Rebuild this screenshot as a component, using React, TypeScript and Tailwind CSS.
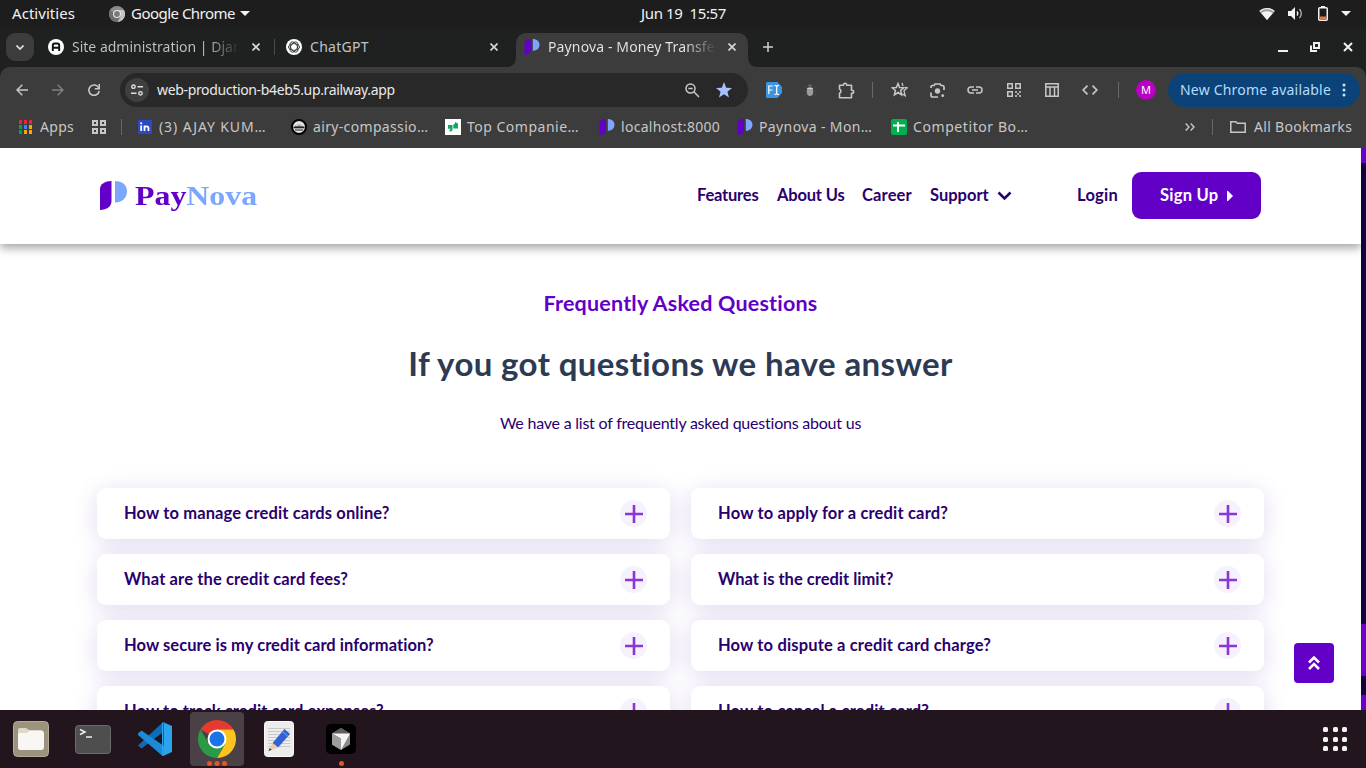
import type { ReactNode } from "react";

type Box = { children?: ReactNode; className?: string };

function Svg({ w, h = w, vb, className = "", children }: { w: number; h?: number; vb?: string; className?: string; children: ReactNode }) {
  return (
    <svg width={w} height={h} viewBox={vb ?? `0 0 ${w} ${h}`} className={`block shrink-0 ${className}`} fill="none">
      {children}
    </svg>
  );
}

function T({ className = "", children }: Box) {
  return <span className={`inline-block shrink-0 whitespace-pre ${className}`}>{children}</span>;
}

function NovaMark({ w = 16, h = 16 }: { w?: number; h?: number }) {
  return (
    <Svg w={w} h={h} vb="0 0 27 29">
      <path d="M0 29V8C0 3 5 0 11.5 0V20C11.5 25.500 7 28.500 0 29Z" fill="#6200c8" />
      <path d="M15 0C22 0 27 4 27 10.500C27 17 22 21.500 15 21.500Z" fill="#7da7ff" />
    </Svg>
  );
}

function Cell({ children, className = "w-9" }: Box) {
  return <div className={`flex h-9 shrink-0 items-center justify-center ${className}`}>{children}</div>;
}

function TopBar() {
  return (
    <div className="grid h-[27px] grid-cols-[641px_1fr_auto] items-center bg-[#1d1d1d] text-[15px] leading-[27px] text-[#f2f2f2]">
      <div className="flex items-center pl-3">
        <T className="w-[97px] tracking-[0.05px]">Activities</T>
        <Svg w={16}>
          <circle cx="8" cy="8" r="8" fill="#8c8c8c" />
          <path d="M8 4h7A8 8 0 0 1 8.500 16l3.500-6Z" fill="#c4c4c4" />
          <path d="M1 4.500A8 8 0 0 0 8.500 16L11 11Z" fill="#6e6e6e" />
          <circle cx="8" cy="8" r="4" fill="#e8e8e8" />
          <circle cx="8" cy="8" r="2.900" fill="#7b7b7b" />
        </Svg>
        <T className="ml-[6px] w-[109px] tracking-[-0.52px]">Google Chrome</T>
        <Svg w={10} h={5}><path d="M0 0h10L5 5Z" fill="#f2f2f2" /></Svg>
      </div>
      <T className="tracking-[-0.37px]">{"Jun 19  15:57"}</T>
      <div className="flex items-center pr-[15px]">
        <Svg w={16} h={14}>
          <path d="M0 4C4.500 0 11.500 0 16 4L8 13Z" fill="#9a9a9a" />
          <path d="M1 4.200C5 .8 11 .8 15 4.200" stroke="#f2f2f2" strokeWidth="1.200" />
          <path d="M2.200 6C5.500 3.600 10.500 3.600 13.800 6L8 13Z" fill="#f2f2f2" />
        </Svg>
        <Svg w={15} h={13} className="ml-[13px]">
          <path d="M0 4h3l4-4v13l-4-4H0Z" fill="#f2f2f2" />
          <path d="M9 4.500q1.600 2 0 4" stroke="#f2f2f2" strokeWidth="1.300" />
          <path d="M11.500 2q3.600 4.500 0 9" stroke="#b5b5b5" strokeWidth="1.300" />
        </Svg>
        <Svg w={10} h={15} className="ml-[15px]">
          <path d="M3 0h4v1.500H3Z" fill="#f2f2f2" />
          <rect x=".75" y="1.750" width="8.500" height="12.500" rx="1" stroke="#f2f2f2" strokeWidth="1.500" />
          <rect x="2" y="10.500" width="6" height="2.500" fill="#f0743c" />
        </Svg>
        <Svg w={10} h={5} className="ml-[13px]"><path d="M0 0h10L5 5Z" fill="#f2f2f2" /></Svg>
      </div>
    </div>
  );
}

function Close({ className = "" }: { className?: string }) {
  return <Svg w={8} className={className}><path d="M.5.500l7 7M7.500.500l-7 7" stroke="#d8d8d8" strokeWidth="1.600" /></Svg>;
}

function TabStrip() {
  return (
    <div className="flex h-10 items-center bg-[#1f2020] text-sm text-[#c3c3c3]">
      <div className="ml-[6px] flex size-7 items-center justify-center rounded-[9px] bg-[#3c3c3c]">
        <Svg w={8} h={5}><path d="M.5.500 4 4 7.500.500" stroke="#e0e0e0" strokeWidth="1.700" /></Svg>
      </div>
      <div className="ml-[14px] flex w-[226px] items-center">
        <Svg w={16}>
          <circle cx="8" cy="8" r="8" fill="#fff" />
          <path d="M4.800 12V6.200Q4.800 4.500 6.500 4.500h3Q11.200 4.500 11.200 6.200V12M4.800 8.800h6.400" stroke="#111" strokeWidth="1.900" />
        </Svg>
        <div className="ml-2 w-[168px] overflow-hidden bg-linear-to-r from-[#c3c3c3] from-80% to-transparent to-100% bg-clip-text text-transparent">
          <T>Site administration | Django</T>
        </div>
        <Close className="ml-[12px]" />
      </div>
      <div className="h-4 w-px bg-[#4a4a4a]" />
      <div className="ml-[11px] flex w-[220px] items-center">
        <Svg w={16}>
          <circle cx="8" cy="8" r="8" fill="#fff" />
          <g stroke="#222" strokeWidth=".8">
            <ellipse cx="8" cy="8" rx="5.600" ry="3.300" />
            <ellipse cx="8" cy="8" rx="5.600" ry="3.300" transform="rotate(60 8 8)" />
            <ellipse cx="8" cy="8" rx="5.600" ry="3.300" transform="rotate(120 8 8)" />
          </g>
        </Svg>
        <T className="ml-2 w-[180px] tracking-[0.3px]">ChatGPT</T>
        <Close />
      </div>
      <div className="flex h-[34px] self-end">
        <Svg w={10} className="self-end"><path d="M10 0V10H0Q10 10 10 0Z" fill="#3c3c3c" /></Svg>
        <div className="flex w-[232px] items-center rounded-t-[10px] bg-[#3c3c3c] pb-[6px] pl-2">
          <NovaMark w={16} h={16} />
          <div className="ml-2 w-[168px] overflow-hidden bg-linear-to-r from-[#e8e8e8] from-82% to-transparent to-100% bg-clip-text text-transparent">
            <T className="tracking-[0.13px]">Paynova - Money Transfer</T>
          </div>
          <Close className="ml-[12px]" />
        </div>
        <Svg w={10} className="self-end"><path d="M0 0V10H10Q0 10 0 0Z" fill="#3c3c3c" /></Svg>
      </div>
      <Svg w={10} className="ml-[5px]"><path d="M5 0v10M0 5h10" stroke="#d0d0d0" strokeWidth="1.500" /></Svg>
      <div className="ml-auto flex items-center pr-[13px]">
        <Svg w={10} h={10}><path d="M0 9h10" stroke="#f0f0f0" strokeWidth="2" /></Svg>
        <Svg w={10} h={10} className="ml-[22px]">
          <path d="M4 1h5v5H4ZM1 3.500V9h6" stroke="#f0f0f0" strokeWidth="2" />
        </Svg>
        <Svg w={10} h={10} className="ml-[23px]"><path d="M1 1l8 8M9 1l-8 8" stroke="#f0f0f0" strokeWidth="2" /></Svg>
      </div>
    </div>
  );
}

function Toolbar() {
  return (
    <div className="flex h-[46px] items-center pl-1">
      <Cell><Svg w={12}><path d="M12 6H1M6.300.700 1 6l5.300 5.300" stroke="#c7c7c7" strokeWidth="1.500" /></Svg></Cell>
      <Cell><Svg w={12}><path d="M0 6h11M5.700.700 11 6l-5.300 5.300" stroke="#808080" strokeWidth="1.500" /></Svg></Cell>
      <Cell>
        <Svg w={12}>
          <path d="M10.800 4A5.200 5.200 0 1 0 11.200 7" stroke="#c7c7c7" strokeWidth="1.600" />
          <path d="M11.300 0v4.700H6.800" stroke="#c7c7c7" strokeWidth="1.600" />
        </Svg>
      </Cell>
      <div className="ml-2 flex h-[34px] w-[628px] shrink-0 items-center rounded-full bg-[#282828] pl-[5px]">
        <div className="flex size-6 items-center justify-center rounded-full bg-[#3f3f3f]">
          <Svg w={12}>
            <circle cx="2.500" cy="2.700" r="1.700" stroke="#e0e0e0" strokeWidth="1.400" />
            <path d="M6.500 2.700H12M0 9.300h5.500" stroke="#e0e0e0" strokeWidth="1.500" />
            <circle cx="9.500" cy="9.300" r="1.700" stroke="#e0e0e0" strokeWidth="1.400" />
          </Svg>
        </div>
        <T className="ml-2 text-sm tracking-[-0.34px] text-[#e8e8e8]">web-production-b4eb5.up.railway.app</T>
        <Svg w={15} className="ml-auto">
          <circle cx="5.500" cy="5.500" r="4.500" stroke="#c7c7c7" strokeWidth="1.500" />
          <path d="M3.300 5.500h4.400M8.800 8.800l5.200 5.200" stroke="#c7c7c7" strokeWidth="1.500" />
        </Svg>
        <Svg w={16} className="mr-4 ml-[16px]" vb="0 0 16 16"><path d="m8 0 2.200 5.700 5.800.3-4.600 3.700L13 15.600 8 12.200 3 15.600l1.600-5.900L0 6l5.800-.3Z" fill="#a8c0ff" /></Svg>
      </div>
      <Cell className="ml-[8px] w-9">
        <Svg w={16}>
          <path d="M1.500 0h10L16 5v6l-4.500 5h-10Q0 16 0 14.500v-13Q0 0 1.500 0Z" fill="#3d94e0" />
          <path d="M2.800 12V4H7M2.800 8h3.700M8.500 3.500h1.200l1 1 1-1H13M10.700 4.500v7M8.500 12.500h1.200l1-1 1 1H13" stroke="#fff" strokeWidth="1.200" />
        </Svg>
      </Cell>
      <Cell className="w-9">
        <Svg w={14}>
          <path d="M4.500 3.500Q7-1.500 9.500 3.500Z" fill="#666" />
          <path d="M1.500 4 4 5.500M1 8h2.500M1.500 12.500 4 10.500M12.500 4 10 5.500M13 8h-2.500M12.500 12.500 10 10.500" stroke="#4d4d4d" />
          <ellipse cx="7" cy="8.500" rx="3.200" ry="4.500" fill="#9b9b9b" />
          <path d="M4.200 5.500h5.600" stroke="#cfcfcf" />
        </Svg>
      </Cell>
      <Cell className="w-9">
        <Svg w={17}>
          <path d="M1.500 3.300h4V2.800a1.600 1.600 0 0 1 3.200 0v.5h4.800v5h.7a1.500 1.500 0 0 1 0 3h-.7v4.400h-12v-4.400a2.300 2.300 0 0 0 0-4.200Z" stroke="#c7c7c7" strokeWidth="1.600" strokeLinejoin="round" />
        </Svg>
      </Cell>
      <div className="ml-[8px] h-4 w-px bg-[#686868]" />
      <Cell className="ml-[8px] w-9">
        <Svg w={17} h={16}>
          <path d="m7 1.500 1.600 4 4.200.3-3.200 2.700 1 4.300L7 10.500l-3.600 2.300 1-4.300L1.200 5.800l4.200-.3Z" stroke="#c7c7c7" strokeWidth="1.500" />
          <path d="m11 1 1 3M14 5.500l2.200.3-3.200 3 1.200 5-3-2" stroke="#c7c7c7" strokeWidth="1.300" />
        </Svg>
      </Cell>
      <Cell className="ml-[2px] w-9">
        <Svg w={15} h={15}>
          <path d="M1 5V4Q1 2.500 2.500 2.500H4L5 1h5l1 1.500h1.500Q14 2.500 14 4v3M1 9.500v2.800Q1 14 2.700 14H8" stroke="#c7c7c7" strokeWidth="1.700" />
          <circle cx="7.500" cy="8" r="2.700" fill="#c7c7c7" />
          <circle cx="12.700" cy="12.700" r="1.400" fill="#c7c7c7" />
        </Svg>
      </Cell>
      <Cell className="ml-[2px] w-9">
        <Svg w={16} h={8}>
          <path d="M7 1H4a3 3 0 0 0 0 6h3M9 1h3a3 3 0 0 1 0 6H9M5 4h6" stroke="#c7c7c7" strokeWidth="1.500" />
        </Svg>
      </Cell>
      <Cell className="ml-[3px] w-9">
        <Svg w={14}>
          <path d="M.750.750h4.500v4.500H.750ZM8.750.750h4.500v4.500h-4.500ZM.750 8.750h4.500v4.500H.750Z" stroke="#c7c7c7" strokeWidth="1.500" />
          <path d="M8 8h2v2H8ZM10 10h2v2h-2ZM12 8h2v2h-2ZM8 12h2v2H8ZM12 12h2v2h-2Z" fill="#aaa" />
        </Svg>
      </Cell>
      <Cell className="ml-[2px] w-9">
        <Svg w={14}><path d="M.800.800h12.400v12.400H.800ZM.800 4h12.400M5 4v9.500M9.500 4v9.500" stroke="#c7c7c7" strokeWidth="1.500" /></Svg>
      </Cell>
      <Cell className="ml-[2px] w-9">
        <Svg w={16} h={10}><path d="M5.500.700 1.200 5l4.300 4.300M10.500.700 14.800 5l-4.300 4.300" stroke="#c7c7c7" strokeWidth="1.700" /></Svg>
      </Cell>
      <div className="ml-[10px] h-4 w-px bg-[#686868]" />
      <div className="ml-[17px] flex size-5 shrink-0 items-center justify-center rounded-full bg-[#b800c2] text-[11px] text-white">M</div>
      <div className="ml-3 flex h-[34px] w-48 shrink-0 items-center rounded-full bg-[#0b4278] pl-3 text-sm text-[#b4dcfb]">
        <T className="w-[162px] tracking-[0.2px]">New Chrome available</T>
        <Svg w={4} h={14}><circle cx="2" cy="2" r="1.500" fill="#c8e6ff" /><circle cx="2" cy="7" r="1.500" fill="#c8e6ff" /><circle cx="2" cy="12" r="1.500" fill="#c8e6ff" /></Svg>
      </div>
    </div>
  );
}

function Bookmark({ icon, children, className = "w-[154px]" }: Box & { icon: ReactNode }) {
  return (
    <div className={`flex shrink-0 items-center gap-[6px] ${className}`}>
      {icon}
      {children}
    </div>
  );
}

const appDots = ["#f02040", "#f02040", "#f02040", "#0a9d58", "#3b82f6", "#f9a800", "#0a9d58", "#f9a800", "#f9a800"];

function Bookmarks() {
  return (
    <div className="flex h-[35px] items-center pb-[7px] text-sm text-[#c7c7c7]">
      <div className="ml-[19px] grid w-[13px] grid-cols-3 gap-x-[2px] gap-y-px">
        {appDots.map((c, i) => (
          <Svg key={i} w={3} h={4}><rect width="3" height="4" fill={c} /></Svg>
        ))}
      </div>
      <T className="ml-2 w-[52px] tracking-[0.3px]">Apps</T>
      <Svg w={14}><path d="M1 1h4v4H1ZM9 1h4v4H9ZM1 9h4v4H1ZM9 9h4v4H9Z" stroke="#c7c7c7" strokeWidth="2" /></Svg>
      <div className="ml-[15px] h-4 w-px bg-[#686868]" />
      <Bookmark className="ml-[15px] w-[154px]" icon={
        <Svg w={16}>
          <rect x="1" y="1" width="14" height="14" fill="#2c49c0" />
          <path d="M4.200 6.500V12M7.500 12V6.500M7.500 9.500Q7.500 7.300 9.500 7.300T11.500 9.500V12" stroke="#fff" strokeWidth="1.800" />
          <circle cx="4.200" cy="4.300" r="1.100" fill="#fff" />
        </Svg>}>
        <T className="tracking-[0.9px]">(3) AJAY KUM…</T>
      </Bookmark>
      <Bookmark icon={
        <Svg w={16}>
          <circle cx="8" cy="8" r="7" fill="#e4e4e4" stroke="#000" strokeWidth="2" />
          <path d="M3 8Q8 2.500 13 8V9.500H3Z" fill="#6f6f6f" />
          <path d="M2.500 8.300h11M4 11h8" stroke="#222" strokeWidth="1.200" />
          <path d="M5 6.700q3-1.700 6 0" stroke="#ddd" />
        </Svg>}>
        <T className="tracking-[0.34px]">airy-compassio…</T>
      </Bookmark>
      <Bookmark icon={
        <Svg w={16}>
          <rect width="16" height="16" fill="#fff" />
          <path d="M3 6h4.500v4.500Q7.500 12.500 4.500 12.500V11Q5.500 10.700 5.500 9.700H3ZM13 9.500V4.500L10 3v1.500Q8.300 5 8.300 6.500V9.500Z" fill="#12a862" />
        </Svg>}>
        <T className="tracking-[0.5px]">Top Companie…</T>
      </Bookmark>
      <Bookmark className="w-[138px]" icon={<NovaMark />}><T className="tracking-[0.3px]">localhost:8000</T></Bookmark>
      <Bookmark icon={<NovaMark />}><T className="tracking-[0.38px]">Paynova - Mon…</T></Bookmark>
      <Bookmark icon={
        <Svg w={16}>
          <rect width="16" height="16" rx="2" fill="#00b04f" />
          <path d="M2 6.500h12M7 3v10" stroke="#fff" strokeWidth="2" />
        </Svg>}>
        <T className="tracking-[0.58px]">Competitor Bo…</T>
      </Bookmark>
      <Svg w={10} h={8} className="ml-[140px]"><path d="M.700.500 4 4 .700 7.500M5.700.500 9 4 5.700 7.500" stroke="#c7c7c7" strokeWidth="1.400" /></Svg>
      <div className="ml-[17px] h-4 w-px bg-[#686868]" />
      <Svg w={16} h={12} className="ml-[17px]"><path d="M.800.800h5l1.500 1.500h7.900v8.900H.800Z" stroke="#c7c7c7" strokeWidth="1.500" /></Svg>
      <T className="ml-2 tracking-[0.3px]">All Bookmarks</T>
    </div>
  );
}

function SiteHeader() {
  return (
    <header className="relative z-10 flex h-24 shrink-0 items-center bg-white pb-px font-[Lato,sans-serif] text-[16.500px] font-bold text-[#29006e] shadow-[0_4px_9px_rgba(0,0,0,0.36)]">
      <div className="ml-[100px] flex w-[597px] items-center">
        <NovaMark w={27} h={29} />
        <span className="ml-2 origin-left scale-x-[1.18] font-['Liberation_Serif',serif] text-[27px] leading-7 font-bold text-[#6200c8]">
          Pay<span className="text-[#7da7ff]">Nova</span>
        </span>
      </div>
      <T className="w-20 tracking-[-0.2px]">Features</T>
      <T className="w-[85px] tracking-[-0.18px]">About Us</T>
      <T className="w-[68px] tracking-[0.15px]">Career</T>
      <T className="w-[67px]">Support</T>
      <Svg w={15} h={9}><path d="m1.500 1.500 6 6 6-6" stroke="#29006e" strokeWidth="2.500" /></Svg>
      <T className="ml-[65px] w-[55px] tracking-[0.25px]">Login</T>
      <div className="flex h-[47px] w-[129px] items-center rounded-[9px] bg-[#6200c8] pl-7 text-white">
        <T className="w-[66px] tracking-[0.25px]">Sign Up</T>
        <Svg w={7} h={10}><path d="M1 0h1l5 5-5 5H1Z" fill="#fff" /></Svg>
      </div>
    </header>
  );
}

const faqs: [string, string][] = [
  ["How to manage credit cards online?", "tracking-[0.13px]"],
  ["How to apply for a credit card?", "tracking-[0.17px]"],
  ["What are the credit card fees?", "tracking-[0.13px]"],
  ["What is the credit limit?", "tracking-[0.01px]"],
  ["How secure is my credit card information?", "tracking-[0.06px]"],
  ["How to dispute a credit card charge?", "tracking-[0.16px]"],
  ["How to track credit card expenses?", "tracking-[0.08px]"],
  ["How to cancel a credit card?", "tracking-[0.16px]"],
];

function Faq({ q, t }: { q: string; t: string }) {
  return (
    <div className="flex h-[51px] items-center justify-between rounded-[9px] bg-white pr-[23px] pl-[27px] shadow-[0_4px_24px_rgba(80,20,170,0.16)]">
      <T className={`font-[Lato,sans-serif] text-[16.500px] font-bold text-[#29006e] ${t}`}>{q}</T>
      <Svg w={27}>
        <circle cx="13.500" cy="13.500" r="13.500" fill="#f6f2fd" />
        <path d="M14 5v18M5 14h18" stroke="#8a35d6" strokeWidth="2.600" />
      </Svg>
    </div>
  );
}

function Site() {
  return (
    <main className="flex h-[562px] overflow-hidden bg-white">
      <div className="relative flex w-[1361px] flex-col overflow-hidden">
        <SiteHeader />
        <section className="flex flex-col items-center font-[Lato,sans-serif]">
          <T className="mt-[44px] text-[21.500px] leading-[30px] font-bold tracking-[0.2px] text-[#6200c8]">Frequently Asked Questions</T>
          <T className="mt-[25px] text-[33px] leading-[40px] font-bold tracking-[0.38px] text-[#2d3a54]">If you got questions we have answer</T>
          <T className="mt-[28px] text-[16px] leading-6 tracking-[-0.22px] text-[#29006e]">We have a list of frequently asked questions about us</T>
        </section>
        <div className="mx-[97px] mt-[53px] grid grid-cols-2 gap-x-[21px] gap-y-[15px]">
          {faqs.map(([q, t]) => <Faq key={q} q={q} t={t} />)}
        </div>
        <div className="absolute top-[495px] left-[1294px] flex size-10 items-center justify-center rounded-[4px] bg-[#6200c8]">
          <Svg w={12} h={14}><path d="m1 6.500 5-5 5 5M1 13l5-5 5 5" stroke="#fff" strokeWidth="2.500" /></Svg>
        </div>
      </div>
      <div className="flex w-[5px] flex-col bg-[#12003f]">
        <div className="h-[15px] bg-[#6a00cc]" />
        <div className="mt-[461px] h-[52px] bg-[#6a00cc]" />
        <div className="mt-[19px] h-[15px] bg-[#6a00cc]" />
      </div>
    </main>
  );
}

function Dock() {
  return (
    <div className="flex h-[58px] items-center bg-[#22151e]">
      <Svg w={36} className="ml-[13px]">
        <rect x=".5" y=".5" width="35" height="35" rx="4" fill="#9c937d" stroke="#b5ad98" />
        <path d="M5 9q0-2 2-2h6l3 2h12q2 0 2 2v15q0 3-3 3H8q-3 0-3-3Z" fill="#ddd8ca" />
        <path d="M5 13q0-1 1-1h8l2-2h13q2 0 2 2v14q0 3-3 3H8q-3 0-3-3Z" fill="#f8f7f5" />
      </Svg>
      <Svg w={36} h={29} className="ml-[26px]">
        <rect x=".5" y=".5" width="35" height="28" rx="3" fill="#4e4e4e" stroke="#6b6b6b" />
        <path d="m5 4.500 5 2.500-5 2.500M11 12h6" stroke="#eee" strokeWidth="1.500" />
      </Svg>
      <Svg w={34} h={34} className="ml-[27px]">
        <path d="M0 23.500 24 1V11L3.500 26.500Z" fill="#0c6cb5" />
        <path d="M0 11.500 3.500 8.500 26 24V34L24 33.500 0 13Z" fill="#1b8ad8" />
        <path d="M25 0 34 4V30L25 34Q26 33.500 26 31V3Q26 .5 25 0Z" fill="#2ba4f0" />
        <path d="M24 1 25.500 0V34L24 33.500Z" fill="#2ba4f0" />
      </Svg>
      <div className="ml-[18px] flex h-[54px] w-[54px] flex-col items-center rounded-[4px] bg-[#4c4047] pt-[8px]">
        <Svg w={38} vb="0 0 38 38">
          <path d="M19 19 2.550 9.500A19 19 0 0 1 35.450 9.500H19Z" fill="#e33b2e" />
          <path d="M19 9.500h16.450A19 19 0 0 1 19 38l8.200-14.200Z" fill="#fcc31e" />
          <path d="M2.550 9.500A19 19 0 0 0 19 38l8.200-14.200L19 28l-8.200-4.200Z" fill="#2a9a47" />
          <circle cx="19" cy="19" r="9.500" fill="#fff" />
          <circle cx="19" cy="19" r="7.500" fill="#1a73e8" />
        </Svg>
        <Svg w={20} h={5} className="mt-[3px]"><circle cx="2.500" cy="2.500" r="2.500" fill="#e95420" /><circle cx="10" cy="2.500" r="2.500" fill="#e95420" /><circle cx="17.500" cy="2.500" r="2.500" fill="#e95420" /></Svg>
      </div>
      <Svg w={30} h={36} className="ml-[20px]">
        <rect x=".5" y=".5" width="29" height="35" rx="3" fill="#ececec" stroke="#fafafa" />
        <path d="M4 7.500h22M4 10.500h22M4 13.500h22M4 16.500h22M4 19.500h22M4 22.500h22M4 25.500h22" stroke="#c9c9c9" />
        <path d="m20.500 8 5.500 5-12 13.500-5.500-4.500Z" fill="#2f63d3" />
        <path d="m18.500 10.500 5.200 4.800" stroke="#5a8af0" strokeWidth="1.500" />
        <path d="m8.500 22 5.500 4.500L4.500 30Z" fill="#f2c9a5" />
        <path d="M4.500 30 5.700 27l2 1.800Z" fill="#333" />
      </Svg>
      <div className="ml-[32px] flex h-[58px] w-[30px] flex-col items-center pt-[14px]">
        <Svg w={30}>
          <rect width="30" height="30" rx="5" fill="#000" />
          <path d="M15 4 24 9.500V20.500L15 26 6 20.500V9.500Z" fill="#8b8b8b" />
          <path d="M15 4 24 9.500 15 14 6 9.500Z" fill="#5e5e5e" />
          <path d="M6 9.500H24L15 26V14.500Z" fill="#f4f4f4" />
          <path d="M6 9.500 15 14.500V26L6 20.500Z" fill="#9d9d9d" />
        </Svg>
        <Svg w={5} className="mt-[7px]"><circle cx="2.500" cy="2.500" r="2.500" fill="#e95420" /></Svg>
      </div>
      <div className="mr-[19px] ml-auto grid grid-cols-3 gap-[4.500px]">
        {Array.from({ length: 9 }, (_, i) => <div key={i} className="size-[5px] rounded-[1.500px] bg-[#f2f2f2]" />)}
      </div>
    </div>
  );
}

export default function App() {
  return (
    <div className="h-[768px] w-[1366px] overflow-hidden bg-[#1f2020] font-['Noto_Sans',sans-serif]">
      <TopBar />
      <TabStrip />
      <div className="h-[81px] rounded-t-[10px] bg-[#3c3c3c]">
        <Toolbar />
        <Bookmarks />
      </div>
      <Site />
      <Dock />
    </div>
  );
}
